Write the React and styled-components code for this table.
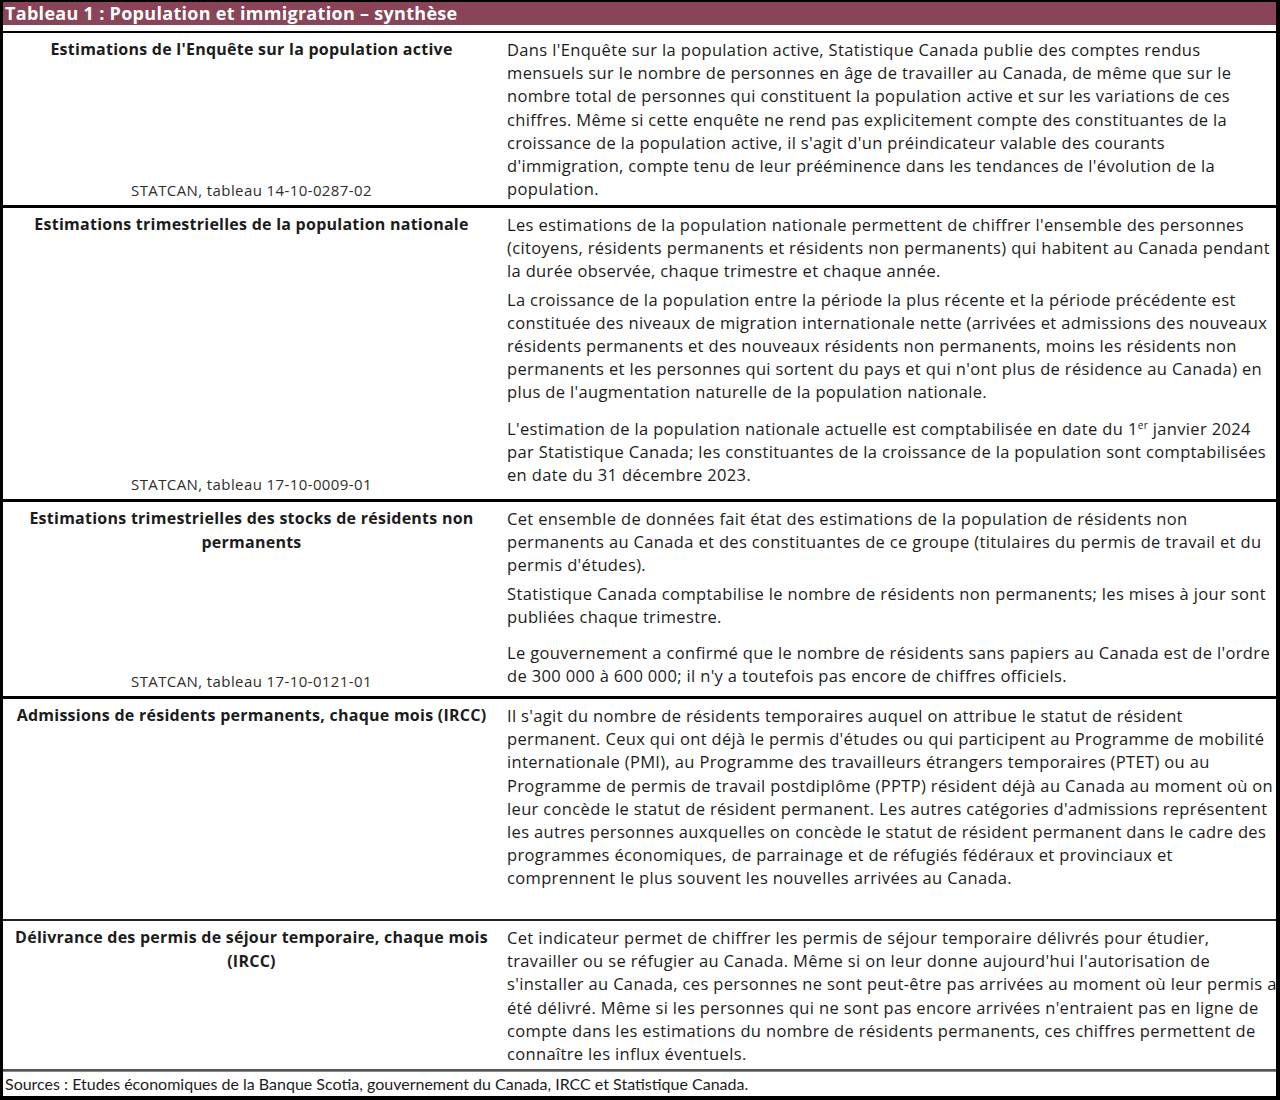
import React from 'react';
import styled, { createGlobalStyle } from 'styled-components';

const GlobalStyle = createGlobalStyle`
  html, body {
    margin: 0;
    padding: 0;
    background: #ffffff;
  }
  body {
    font-family: "Open Sans", "Noto Sans", sans-serif;
    color: #1c1c1c;
  }
`;

const Frame = styled.div`
  width: 1280px;
  height: 1100px;
  box-sizing: border-box;
  border-left: 3px solid #000;
  border-right: 4px solid #000;
  border-top: 2px solid #000;
  border-bottom: 4px solid #000;
  display: flex;
  flex-direction: column;
  background: #fff;
`;

const TitleBar = styled.div`
  background: #8a4458;
  color: #fff;
  font-weight: 700;
  font-size: 18px;
  letter-spacing: 0.3px;
  line-height: 23px;
  height: 23px;
  padding-left: 2px;
  white-space: nowrap;
`;

const Gap = styled.div`
  height: 6px;
  border-bottom: 2px solid #000;
`;

const Row = styled.div`
  display: grid;
  grid-template-columns: 497px 1fr;
  height: ${(p) => p.$h}px;
  box-sizing: border-box;
  border-bottom: ${(p) => p.$line || '3px solid #000'};
`;

const LeftCell = styled.div`
  display: flex;
  flex-direction: column;
  justify-content: space-between;
  align-items: center;
  text-align: center;
  padding: 5px 6px 5px 6px;
`;

const RowTitle = styled.div`
  font-weight: 700;
  font-size: 16px;
  letter-spacing: 0.25px;
  line-height: 23.5px;
  white-space: nowrap;
`;

const Source = styled.div`
  font-size: 15px;
  letter-spacing: 0.4px;
  line-height: 20px;
  color: #2e2e2e;
`;

const RightCell = styled.div`
  padding: 5px 0 0 7px;
  font-size: 16.5px;
  letter-spacing: 0.35px;
  line-height: 23.2px;
  white-space: nowrap;
`;

const Para = styled.p`
  margin: 0 0 ${(p) => p.$after || 0}px 0;
`;

const Sup = styled.sup`
  font-size: 10px;
  line-height: 0;
`;

const Footer = styled.div`
  flex: 1;
  font-family: Lato, "Noto Sans", sans-serif;
  font-size: 16px;
  line-height: 24px;
  padding-left: 2px;
  color: #1c1c1c;
  border-top: 1px solid #888;
  white-space: nowrap;
`;

const Lines = ({ lines }) =>
  lines.map((l, i) => (
    <React.Fragment key={i}>
      {l}
      {i < lines.length - 1 && <br />}
    </React.Fragment>
  ));

export default function App() {
  return (
    <>
      <GlobalStyle />
      <Frame>
        <TitleBar>Tableau 1 : Population et immigration – synthèse</TitleBar>
        <Gap />

        <Row $h={175}>
          <LeftCell>
            <RowTitle>Estimations de l'Enquête sur la population active</RowTitle>
            <Source>STATCAN, tableau 14-10-0287-02</Source>
          </LeftCell>
          <RightCell>
            <Para>
              <Lines
                lines={[
                  "Dans l'Enquête sur la population active, Statistique Canada publie des comptes rendus",
                  "mensuels sur le nombre de personnes en âge de travailler au Canada, de même que sur le",
                  "nombre total de personnes qui constituent la population active et sur les variations de ces",
                  "chiffres. Même si cette enquête ne rend pas explicitement compte des constituantes de la",
                  "croissance de la population active, il s'agit d'un préindicateur valable des courants",
                  "d'immigration, compte tenu de leur prééminence dans les tendances de l'évolution de la",
                  'population.',
                ]}
              />
            </Para>
          </RightCell>
        </Row>

        <Row $h={294}>
          <LeftCell>
            <RowTitle>Estimations trimestrielles de la population nationale</RowTitle>
            <Source>STATCAN, tableau 17-10-0009-01</Source>
          </LeftCell>
          <RightCell>
            <Para $after={5}>
              <Lines
                lines={[
                  "Les estimations de la population nationale permettent de chiffrer l'ensemble des personnes",
                  '(citoyens, résidents permanents et résidents non permanents) qui habitent au Canada pendant',
                  'la durée observée, chaque trimestre et chaque année.',
                ]}
              />
            </Para>
            <Para $after={13}>
              <Lines
                lines={[
                  'La croissance de la population entre la période la plus récente et la période précédente est',
                  'constituée des niveaux de migration internationale nette (arrivées et admissions des nouveaux',
                  'résidents permanents et des nouveaux résidents non permanents, moins les résidents non',
                  "permanents et les personnes qui sortent du pays et qui n'ont plus de résidence au Canada) en",
                  "plus de l'augmentation naturelle de la population nationale.",
                ]}
              />
            </Para>
            <Para>
              L'estimation de la population nationale actuelle est comptabilisée en date du 1<Sup>er</Sup> janvier 2024
              <br />
              par Statistique Canada; les constituantes de la croissance de la population sont comptabilisées
              <br />
              en date du 31 décembre 2023.
            </Para>
          </RightCell>
        </Row>

        <Row $h={197}>
          <LeftCell>
            <RowTitle>
              Estimations trimestrielles des stocks de résidents non
              <br />
              permanents
            </RowTitle>
            <Source>STATCAN, tableau 17-10-0121-01</Source>
          </LeftCell>
          <RightCell>
            <Para $after={5}>
              <Lines
                lines={[
                  'Cet ensemble de données fait état des estimations de la population de résidents non',
                  'permanents au Canada et des constituantes de ce groupe (titulaires du permis de travail et du',
                  "permis d'études).",
                ]}
              />
            </Para>
            <Para $after={13}>
              <Lines
                lines={[
                  'Statistique Canada comptabilise le nombre de résidents non permanents; les mises à jour sont',
                  'publiées chaque trimestre.',
                ]}
              />
            </Para>
            <Para>
              <Lines
                lines={[
                  "Le gouvernement a confirmé que le nombre de résidents sans papiers au Canada est de l'ordre",
                  "de 300 000 à 600 000; il n'y a toutefois pas encore de chiffres officiels.",
                ]}
              />
            </Para>
          </RightCell>
        </Row>

        <Row $h={222} $line="2px solid #222">
          <LeftCell>
            <RowTitle>Admissions de résidents permanents, chaque mois (IRCC)</RowTitle>
          </LeftCell>
          <RightCell>
            <Para>
              <Lines
                lines={[
                  "Il s'agit du nombre de résidents temporaires auquel on attribue le statut de résident",
                  "permanent. Ceux qui ont déjà le permis d'études ou qui participent au Programme de mobilité",
                  'internationale (PMI), au Programme des travailleurs étrangers temporaires (PTET) ou au',
                  'Programme de permis de travail postdiplôme (PPTP) résident déjà au Canada au moment où on',
                  "leur concède le statut de résident permanent. Les autres catégories d'admissions représentent",
                  'les autres personnes auxquelles on concède le statut de résident permanent dans le cadre des',
                  'programmes économiques, de parrainage et de réfugiés fédéraux et provinciaux et',
                  'comprennent le plus souvent les nouvelles arrivées au Canada.',
                ]}
              />
            </Para>
          </RightCell>
        </Row>

        <Row $h={150} $line="2px solid #555">
          <LeftCell>
            <RowTitle>
              Délivrance des permis de séjour temporaire, chaque mois
              <br />
              (IRCC)
            </RowTitle>
          </LeftCell>
          <RightCell>
            <Para>
              <Lines
                lines={[
                  'Cet indicateur permet de chiffrer les permis de séjour temporaire délivrés pour étudier,',
                  "travailler ou se réfugier au Canada. Même si on leur donne aujourd'hui l'autorisation de",
                  "s'installer au Canada, ces personnes ne sont peut-être pas arrivées au moment où leur permis a",
                  "été délivré. Même si les personnes qui ne sont pas encore arrivées n'entraient pas en ligne de",
                  'compte dans les estimations du nombre de résidents permanents, ces chiffres permettent de',
                  'connaître les influx éventuels.',
                ]}
              />
            </Para>
          </RightCell>
        </Row>

        <Footer>
          Sources : Etudes économiques de la Banque Scotia, gouvernement du Canada, IRCC et Statistique Canada.
        </Footer>
      </Frame>
    </>
  );
}
